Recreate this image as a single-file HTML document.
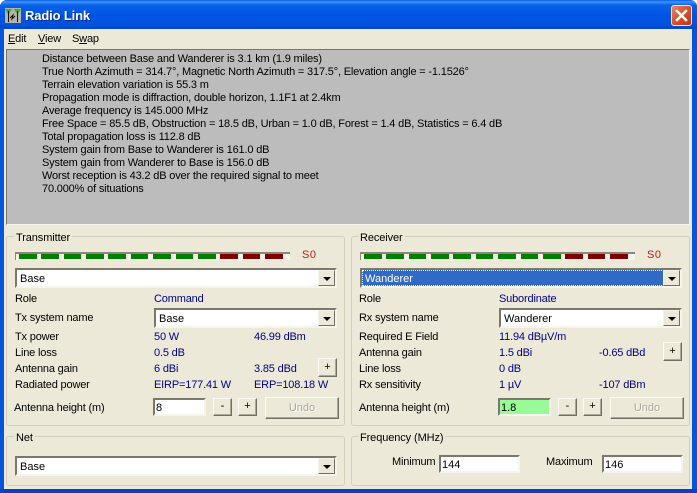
<!DOCTYPE html>
<html><head><meta charset="utf-8"><style>
html,body{margin:0;padding:0}
body{width:697px;height:493px;overflow:hidden;background:#fff;position:relative;font:11px/13px "Liberation Sans",sans-serif;color:#000}
div,span{position:absolute;box-sizing:border-box;white-space:nowrap}
.t{height:13px;line-height:13px;letter-spacing:-.17px;margin-top:1px}
.v{color:#00008c}
.gb{border:1px solid #d0d0bf;border-radius:3px}
.gl{background:#ece9d8;padding:0 2px;height:13px;line-height:13px;letter-spacing:-.1px;margin-top:2px}
.dd{background:#fff;border:2px solid;border-color:#7b776c #f6f4ec #f6f4ec #7b776c;padding:2px 0 0 3px;line-height:15px}
.ar{background:#ece9d8;border:1px solid;border-color:#f5f3ea #716f64 #716f64 #f5f3ea;width:17px;top:0;right:0;bottom:0}
.ar:after{content:"";position:absolute;left:4px;top:6px;border:4px solid transparent;border-top:4px solid #000;border-bottom:0}
.btn{background:#ece9d8;border:1px solid;border-color:#fbfaf5 #716f64 #716f64 #fbfaf5;text-align:center;box-shadow:inset -1px -1px 0 #aca899}
.ed{background:#fff;border:2px solid;border-color:#7b776c #f6f4ec #f6f4ec #7b776c;padding:1px 0 0 1px;line-height:14px;height:18px}
.m{background:#f5f3ea;height:8px;border-top:2px solid #8b867a;border-left:1px solid #8b867a}
.s{height:5px;top:254px}
.g{background:#008000}.r{background:#800000}
</style></head><body>
<!-- window frame -->
<div style="left:0;top:0;width:697px;height:493px;background:#0831d9;border-radius:7px 7px 0 0"></div>
<div style="left:0;top:0;width:697px;height:29px;border-radius:7px 7px 0 0;background:linear-gradient(#0a5fe0 0,#3d95ff 2px,#0a62e8 5px,#0055e5 14px,#0352dc 24px,#0046c8 29px)"></div>
<div style="left:0;top:29px;width:4px;height:464px;background:#0855dd"></div>
<div style="left:692px;top:29px;width:5px;height:464px;background:#0855dd"></div>
<div style="left:0;top:489px;width:697px;height:4px;background:#0840c8"></div>
<svg style="position:absolute;left:5px;top:8px" width="16" height="15" viewBox="0 0 16 15"><rect width="16" height="15" fill="#b4b4a8"/><path d="M0 1h7l-3.500 6zM9 1h7l-3.500 6z" fill="#38b038"/><path d="M3.500 3v11M12.500 3v11" stroke="#111" stroke-width="1"/><path d="M5 10l3-3-1 4 3-3" stroke="#111" fill="none"/></svg>
<div style="left:25px;top:8px;color:#fff;font:bold 13px/16px 'Liberation Sans',sans-serif;letter-spacing:-.15px;text-shadow:1px 1px 0 #0a2a90">Radio Link</div>
<div style="left:671px;top:5px;width:21px;height:21px;border:1px solid #f0e8e0;border-radius:3px;background:linear-gradient(135deg,#e8856a,#d8502a 50%,#b83a18)"></div>
<svg style="position:absolute;left:671px;top:5px" width="21" height="21"><path d="M6 6l9 9M15 6l-9 9" stroke="#fff" stroke-width="2.500" stroke-linecap="square"/></svg>
<!-- client -->
<div style="left:4px;top:29px;width:688px;height:460px;background:#ece9d8"></div>
<div class="t" style="left:8px;top:32px"><u>E</u>dit</div>
<div class="t" style="left:38px;top:32px"><u>V</u>iew</div>
<div class="t" style="left:72px;top:32px">S<u>w</u>ap</div>
<div style="left:6px;top:49px;width:684px;height:176px;background:#bcbcbc;border:1px solid;border-color:#77766c #f6f4ec #f6f4ec #77766c"></div>
<div class="t" style="left:42px;top:52px">Distance between Base and Wanderer is 3.1 km (1.9 miles)</div>
<div class="t" style="left:42px;top:65px">True North Azimuth = 314.7°, Magnetic North Azimuth = 317.5°, Elevation angle = -1.1526°</div>
<div class="t" style="left:42px;top:78px">Terrain elevation variation is 55.3 m</div>
<div class="t" style="left:42px;top:91px">Propagation mode is diffraction, double horizon, 1.1F1 at 2.4km</div>
<div class="t" style="left:42px;top:104px">Average frequency is 145.000 MHz</div>
<div class="t" style="left:42px;top:117px">Free Space = 85.5 dB, Obstruction = 18.5 dB, Urban = 1.0 dB, Forest = 1.4 dB, Statistics = 6.4 dB</div>
<div class="t" style="left:42px;top:130px">Total propagation loss is 112.8 dB</div>
<div class="t" style="left:42px;top:143px">System gain from Base to Wanderer is 161.0 dB</div>
<div class="t" style="left:42px;top:156px">System gain from Wanderer to Base is 156.0 dB</div>
<div class="t" style="left:42px;top:169px">Worst reception is 43.2 dB over the required signal to meet</div>
<div class="t" style="left:42px;top:182px">70.000% of situations</div>

<!-- group boxes -->
<div class="gb" style="left:6px;top:236px;width:339px;height:190px"></div>
<div class="gb" style="left:351px;top:236px;width:339px;height:190px"></div>
<div class="gb" style="left:6px;top:436px;width:339px;height:50px"></div>
<div class="gb" style="left:351px;top:436px;width:339px;height:50px"></div>
<div class="gl" style="left:14px;top:230px">Transmitter</div>
<div class="gl" style="left:358px;top:230px">Receiver</div>
<div class="gl" style="left:14px;top:430px">Net</div>
<div class="gl" style="left:358px;top:430px">Frequency (MHz)</div>

<!-- meters -->
<div class="m" style="left:15px;top:252px;width:275px"></div>
<div class="s g" style="left:19px;width:18px"></div><div class="s g" style="left:41px;width:18px"></div><div class="s g" style="left:64px;width:17px"></div><div class="s g" style="left:86px;width:18px"></div><div class="s g" style="left:108px;width:18px"></div><div class="s g" style="left:131px;width:17px"></div><div class="s g" style="left:153px;width:18px"></div><div class="s g" style="left:176px;width:17px"></div><div class="s g" style="left:198px;width:18px"></div><div class="s r" style="left:220px;width:18px"></div><div class="s r" style="left:243px;width:17px"></div><div class="s r" style="left:265px;width:18px"></div>
<div class="t" style="left:302px;top:248px;color:#c01818;letter-spacing:.6px">S0</div>
<div class="m" style="left:360px;top:252px;width:275px"></div>
<div class="s g" style="left:364px;width:18px"></div><div class="s g" style="left:386px;width:18px"></div><div class="s g" style="left:409px;width:17px"></div><div class="s g" style="left:431px;width:18px"></div><div class="s g" style="left:453px;width:18px"></div><div class="s g" style="left:476px;width:17px"></div><div class="s g" style="left:498px;width:18px"></div><div class="s g" style="left:521px;width:17px"></div><div class="s g" style="left:543px;width:18px"></div><div class="s r" style="left:565px;width:18px"></div><div class="s r" style="left:588px;width:17px"></div><div class="s r" style="left:610px;width:18px"></div>
<div class="t" style="left:647px;top:248px;color:#c01818;letter-spacing:.6px">S0</div>

<!-- Transmitter -->
<div class="dd" style="left:15px;top:268px;width:322px;height:20px">Base<div class="ar"></div></div>
<div class="t" style="left:15px;top:292px">Role</div>
<div class="t v" style="left:154px;top:292px">Command</div>
<div class="t" style="left:15px;top:311px">Tx system name</div>
<div class="dd" style="left:154px;top:308px;width:183px;height:20px">Base<div class="ar"></div></div>
<div class="t" style="left:15px;top:330px">Tx power</div>
<div class="t v" style="left:154px;top:330px">50 W</div>
<div class="t v" style="left:254px;top:330px">46.99 dBm</div>
<div class="t" style="left:15px;top:346px">Line loss</div>
<div class="t v" style="left:154px;top:346px">0.5 dB</div>
<div class="t" style="left:15px;top:362px">Antenna gain</div>
<div class="t v" style="left:154px;top:362px">6 dBi</div>
<div class="t v" style="left:254px;top:362px">3.85 dBd</div>
<div class="btn" style="left:318px;top:358px;width:19px;height:19px;line-height:16px">+</div>
<div class="t" style="left:15px;top:378px">Radiated power</div>
<div class="t v" style="left:154px;top:378px">EIRP=177.41 W</div>
<div class="t v" style="left:254px;top:378px">ERP=108.18 W</div>
<div class="t" style="left:14px;top:401px">Antenna height (m)</div>
<div class="ed" style="left:153px;top:398px;width:53px">8</div>
<div class="btn" style="left:213px;top:398px;width:19px;height:18px;line-height:15px">-</div>
<div class="btn" style="left:238px;top:398px;width:19px;height:18px;line-height:15px">+</div>
<div class="btn" style="left:265px;top:397px;width:74px;height:22px;line-height:20px;color:#a8a598;text-shadow:1px 1px 0 #fff">Undo</div>

<!-- Receiver -->
<div class="dd" style="left:360px;top:268px;width:322px;height:20px;background:#316ac5;color:#fff;outline:1px dotted #fff;outline-offset:-3px">Wanderer<div class="ar"></div></div>
<div class="t" style="left:359px;top:292px">Role</div>
<div class="t v" style="left:499px;top:292px">Subordinate</div>
<div class="t" style="left:359px;top:311px">Rx system name</div>
<div class="dd" style="left:499px;top:308px;width:183px;height:20px">Wanderer<div class="ar"></div></div>
<div class="t" style="left:359px;top:330px">Required E Field</div>
<div class="t v" style="left:499px;top:330px">11.94 dBµV/m</div>
<div class="t" style="left:359px;top:346px">Antenna gain</div>
<div class="t v" style="left:499px;top:346px">1.5 dBi</div>
<div class="t v" style="left:599px;top:346px">-0.65 dBd</div>
<div class="btn" style="left:663px;top:342px;width:19px;height:19px;line-height:16px">+</div>
<div class="t" style="left:359px;top:362px">Line loss</div>
<div class="t v" style="left:499px;top:362px">0 dB</div>
<div class="t" style="left:359px;top:378px">Rx sensitivity</div>
<div class="t v" style="left:499px;top:378px">1 µV</div>
<div class="t v" style="left:599px;top:378px">-107 dBm</div>
<div class="t" style="left:359px;top:401px">Antenna height (m)</div>
<div class="ed" style="left:498px;top:398px;width:53px;background:#98fb98">1.8</div>
<div class="btn" style="left:558px;top:398px;width:19px;height:18px;line-height:15px">-</div>
<div class="btn" style="left:583px;top:398px;width:19px;height:18px;line-height:15px">+</div>
<div class="btn" style="left:610px;top:397px;width:74px;height:22px;line-height:20px;color:#a8a598;text-shadow:1px 1px 0 #fff">Undo</div>

<!-- Net / Frequency -->
<div class="dd" style="left:15px;top:456px;width:322px;height:20px">Base<div class="ar"></div></div>
<div class="t" style="left:392px;top:455px">Minimum</div>
<div class="ed" style="left:439px;top:455px;width:81px;padding-top:1px">144</div>
<div class="t" style="left:546px;top:455px">Maximum</div>
<div class="ed" style="left:602px;top:455px;width:81px;padding-top:1px">146</div>
</body></html>
